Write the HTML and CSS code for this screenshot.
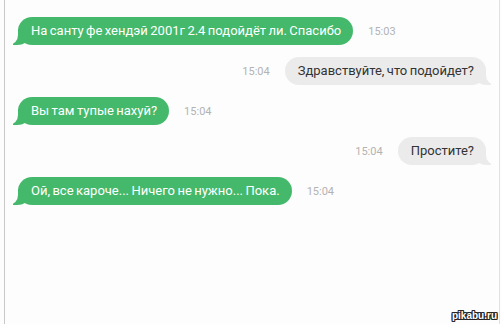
FILE: index.html
```html
<!DOCTYPE html>
<html>
<head>
<meta charset="utf-8">
<link rel="stylesheet" href="styles.css">
</head>
<body>
<div class="frame">
  <div class="chat">
    <div class="row in">
      <div class="bubble">На санту фе хендэй 2001г 2.4 подойдёт ли. Спасибо</div>
      <span class="time">15:03</span>
    </div>
    <div class="row out">
      <span class="time">15:04</span>
      <div class="bubble">Здравствуйте, что подойдет?</div>
    </div>
    <div class="row in">
      <div class="bubble">Вы там тупые нахуй?</div>
      <span class="time">15:04</span>
    </div>
    <div class="row out">
      <span class="time">15:04</span>
      <div class="bubble">Простите?</div>
    </div>
    <div class="row in">
      <div class="bubble">Ой, все кароче... Ничего не нужно... Пока.</div>
      <span class="time">15:04</span>
    </div>
  </div>
  <div class="mark">pikabu.ru</div>
</div>
</body>
</html>
```
FILE: styles.css
```css
html, body {
  margin: 0;
  padding: 0;
  background: #fdfdfd;
}
body {
  width: 502px;
  height: 324px;
  overflow: hidden;
  font-family: Roboto, "Liberation Sans", sans-serif;
}
.frame {
  position: relative;
  margin-left: 4px;
  width: 494px;
  height: 324px;
  border-left: 1px solid #c9c9c9;
  border-right: 1px solid #f1e3b4;
  background: #fdfdfd;
}
.chat {
  display: flex;
  flex-direction: column;
  gap: 12px;
  padding: 17px 10px 0 8px;
}
.row {
  display: flex;
  align-items: center;
  gap: 15px;
}
.row.out {
  justify-content: flex-end;
}
.bubble {
  position: relative;
  z-index: 1;
  font-size: 13px;
  line-height: 16px;
  padding: 6px 12px 6px 13px;
  border-radius: 14px;
  white-space: nowrap;
  word-spacing: -0.8px;
}
.in .bubble {
  background: #44b96b;
  color: #ffffff;
  margin-left: 5px;
}
.out .bubble {
  background: #ebebeb;
  color: #333333;
  margin-right: 3px;
}
.bubble::before,
.bubble::after {
  content: "";
  position: absolute;
  bottom: 0;
  height: 16px;
}
.in .bubble::before {
  left: -5px;
  width: 18px;
  background: #44b96b;
  border-bottom-right-radius: 14px 12px;
  z-index: -1;
}
.in .bubble::after {
  left: -12px;
  width: 12px;
  background: #fdfdfd;
  border-bottom-right-radius: 9px 10px;
}
.out .bubble::before {
  right: -5px;
  width: 18px;
  background: #ebebeb;
  border-bottom-left-radius: 14px 12px;
  z-index: -1;
}
.out .bubble::after {
  right: -11px;
  width: 11px;
  background: #fdfdfd;
  border-bottom-left-radius: 9px 10px;
}
.time {
  font-size: 11px;
  color: #b3b3b3;
}
.mark {
  position: absolute;
  right: 2px;
  bottom: 3px;
  font-family: "Liberation Sans", sans-serif;
  font-weight: bold;
  font-size: 10px;
  line-height: 11px;
  color: #ffffff;
  text-shadow: 1px 0 0 #222, -1px 0 0 #222, 0 1px 0 #222, 0 -1px 0 #222, 1px 1px 0 #222, -1px -1px 0 #222, 1px -1px 0 #222, -1px 1px 0 #222;
}
```
